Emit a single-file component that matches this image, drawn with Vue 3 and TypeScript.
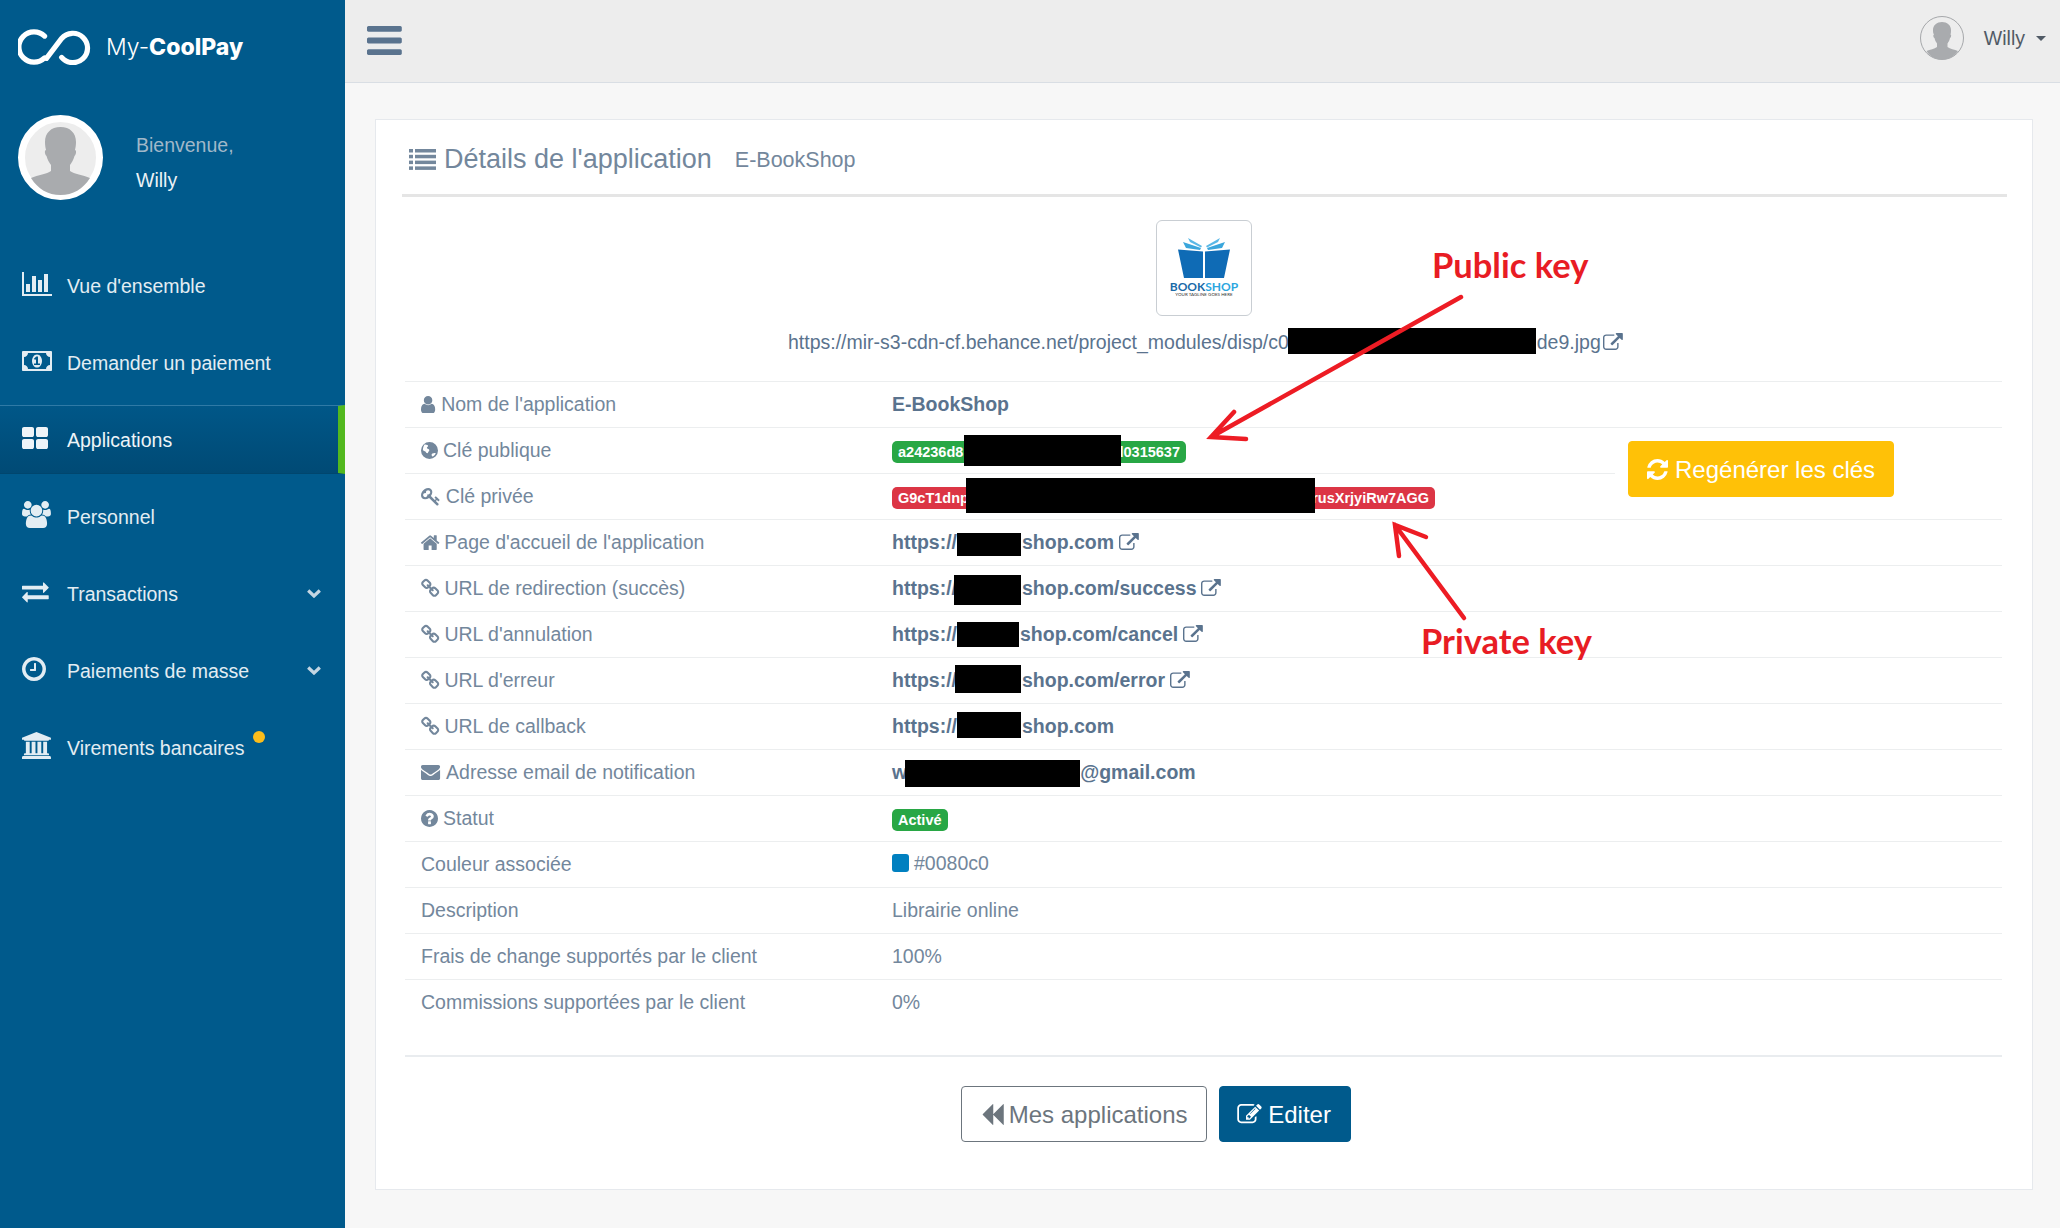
<script setup lang="ts">
import { h } from 'vue'

const icons: Record<string, { vb: string; d: string }> = {
  bars: { vb: '128 256 1536 1280', d: 'M1664 1344v128q0 26-19 45t-45 19h-1408q-26 0-45-19t-19-45v-128q0-26 19-45t45-19h1408q26 0 45 19t19 45zm0-512v128q0 26-19 45t-45 19h-1408q-26 0-45-19t-19-45v-128q0-26 19-45t45-19h1408q26 0 45 19t19 45zm0-512v128q0 26-19 45t-45 19h-1408q-26 0-45-19t-19-45v-128q0-26 19-45t45-19h1408q26 0 45 19t19 45z' },
  user: { vb: '256 128 1280 1536', d: 'M1536 1399q0 109-62.5 187t-150.5 78h-854q-88 0-150.5-78t-62.5-187q0-85 8.5-160.5t31.5-152 58.5-131 94-89 134.5-34.5q131 128 313 128t313-128q76 0 134.5 34.5t94 89 58.5 131 31.5 152 8.5 160.5zm-256-887q0 159-112.5 271.5t-271.5 112.5-271.5-112.5-112.5-271.5 112.5-271.5 271.5-112.5 271.5 112.5 112.5 271.5z' },
  home: { vb: '96 224 1600 1312', d: 'M1472 992v480q0 26-19 45t-45 19h-384v-384h-256v384h-384q-26 0-45-19t-19-45v-480q0-1 .5-3t.5-3l575-474 575 474q1 2 1 6zm223-69l-62 74q-8 9-21 11h-3q-13 0-21-7l-692-577-692 577q-12 8-24 7-13-2-21-11l-62-74q-8-10-7-23.5t11-21.5l719-599q32-26 76-26t76 26l244 204v-195q0-14 9-23t23-9h192q14 0 23 9t9 23v408l219 182q10 8 11 21.5t-7 23.5z' },
  envelope: { vb: '0 256 1792 1408', d: 'M1792 710v794q0 66-47 113t-113 47h-1472q-66 0-113-47t-47-113v-794q44 49 101 87 362 246 497 345 57 42 92.5 65.5t94.5 48 110 24.5h2q51 0 110-24.5t94.5-48 92.5-65.5q170-123 498-345 57-39 100-87zm0-294q0 79-49 151t-122 123q-376 261-468 325-10 7-42.5 30.5t-54 38-52 32.5-57.5 27-50 9h-2q-23 0-50-9t-57.5-27-52-32.5-54-38-42.5-30.5q-91-64-262-182.5t-205-142.5q-62-42-117-115.5t-55-136.5q0-78 41.5-130t118.5-52h1472q65 0 112.5 47t47.5 113z' },
  ext: { vb: '0 0 1792 1536', d: 'M1408 928v320q0 119-84.5 203.5t-203.5 84.5h-832q-119 0-203.5-84.5t-84.5-203.5v-832q0-119 84.5-203.5t203.5-84.5h704q14 0 23 9t9 23v64q0 14-9 23t-23 9h-704q-66 0-113 47t-47 113v832q0 66 47 113t113 47h832q66 0 113-47t47-113v-320q0-14 9-23t23-9h64q14 0 23 9t9 23zm384-864v512q0 26-19 45t-45 19-45-19l-176-176-652 652q-10 10-23 10t-23-10l-114-114q-10-10-10-23t10-23l652-652-176-176q-19-19-19-45t19-45 45-19h512q26 0 45 19t19 45z' },
  question: { vb: '128 128 1536 1536', d: 'M1024 1376v-192q0-14-9-23t-23-9h-192q-14 0-23 9t-9 23v192q0 14 9 23t23 9h192q14 0 23-9t9-23zm256-672q0-88-55.5-163t-138.5-116-170-41q-243 0-371 213-15 24 8 42l132 100q7 6 19 6 16 0 25-12 53-68 86-92 34-24 86-24 48 0 85.5 26t37.5 59q0 38-20 61t-68 45q-63 28-115.5 86.5t-52.5 125.5v36q0 14 9 23t23 9h192q14 0 23-9t9-23q0-19 21.5-49.5t54.5-49.5q32-18 49-28.5t46-35 44.5-48 28-60.5 12.5-81zm384 192q0 209-103 385.5t-279.5 279.5-385.5 103-385.5-103-279.5-279.5-103-385.5 103-385.5 279.5-279.5 385.5-103 385.5 103 279.5 279.5 103 385.5z' },
  refresh: { vb: '128 128 1536 1536', d: 'M1639 1056q0 5-1 7-64 268-268 434.5t-478 166.5q-146 0-282.5-55t-243.5-157l-129 129q-19 19-45 19t-45-19-19-45v-448q0-26 19-45t45-19h448q26 0 45 19t19 45-19 45l-137 137q71 66 161 102t187 36q134 0 250-65t186-179q11-17 53-117 8-23 30-23h192q13 0 22.5 9.5t9.5 22.5zm25-800v448q0 26-19 45t-45 19h-448q-26 0-45-19t-19-45 19-45l138-138q-148-137-349-137-134 0-250 65t-186 179q-11 17-53 117-8 23-30 23h-199q-13 0-22.5-9.5t-9.5-22.5v-7q65-268 270-434.5t480-166.5q146 0 284 55.5t245 156.5l130-129q19-19 45-19t45 19 19 45z' },
  backward: { vb: '64 128 1664 1536', d: 'M1683 141q19-19 32-13t13 32v1472q0 26-13 32t-32-13l-710-710q-9-9-13-19v710q0 26-13 32t-32-13l-710-710q-19-19-19-45t19-45l710-710q19-19 32-13t13 32v710q4-10 13-19z' },
  edit: { vb: '128 128 1664 1536', d: 'M888 1184l116-116-152-152-116 116v56h96v96h56zm440-720q-16-16-33 1l-350 350q-17 17-1 33t33-1l350-350q17-17 1-33zm80 594v190q0 119-84.5 203.5t-203.5 84.5h-832q-119 0-203.5-84.5t-84.5-203.5v-832q0-119 84.5-203.5t203.5-84.5h832q63 0 117 25 15 7 18 23 3 17-9 29l-49 49q-14 14-32 8-23-6-45-6h-832q-66 0-113 47t-47 113v832q0 66 47 113t113 47h832q66 0 113-47t47-113v-126q0-13 9-22l64-64q15-15 35-7t20 29zm-96-738l288 288-672 672h-288v-288zm444 132l-92 92-288-288 92-92q28-28 68-28t68 28l152 152q28 28 28 68t-28 68z' },
  chart: { vb: '64 128 1920 1536', d: 'M576 896v512h-256v-512h256zm384-512v1024h-256v-1024h256zm1024 1152v128h-1920v-1536h128v1408h1792zm-640-896v768h-256v-768h256zm384-384v1152h-256v-1152h256z' },
  money: { vb: '0 256 1920 1280', d: 'M768 1152h384v-96h-128v-448h-114l-148 137 77 80q42-37 55-57h2v288h-128v96zm512-256q0 70-21 142t-59.5 134-101.5 101-138 39-138-39-101.5-101-59.5-134-21-142 21-142 59.5-134 101.5-101 138-39 138 39 101.5 101 59.5 134 21 142zm512 256v-512q-106 0-181-75t-75-181h-1152q0 106-75 181t-181 75v512q106 0 181 75t75 181h1152q0-106 75-181t181-75zm128-832v1152q0 26-19 45t-45 19h-1792q-26 0-45-19t-19-45v-1152q0-26 19-45t45-19h1792q26 0 45 19t19 45z' },
  grid: { vb: '64 128 1664 1408', d: 'M832 1024v384q0 52-38 90t-90 38h-512q-52 0-90-38t-38-90v-384q0-52 38-90t90-38h512q52 0 90 38t38 90zm0-768v384q0 52-38 90t-90 38h-512q-52 0-90-38t-38-90v-384q0-52 38-90t90-38h512q52 0 90 38t38 90zm896 768v384q0 52-38 90t-90 38h-512q-52 0-90-38t-38-90v-384q0-52 38-90t90-38h512q52 0 90 38t38 90zm0-768v384q0 52-38 90t-90 38h-512q-52 0-90-38t-38-90v-384q0-52 38-90t90-38h512q52 0 90 38t38 90z' },
  users: { vb: '0 0 1920 1792', d: 'M593 896q-162 5-265 128h-134q-82 0-138-40.5t-56-118.5q0-353 124-353 6 0 43.5 21t97.5 42.5 119 21.5q67 0 133-23-5 37-5 66 0 139 81 256zm1071 637q0 120-73 189.5t-194 69.5h-874q-121 0-194-69.5t-73-189.5q0-53 3.5-103.5t14-109 26.5-108.5 43-97.5 62-81 85.5-53.5 111.5-20q10 0 43 21.5t73 48 107 48 135 21.5 135-21.5 107-48 73-48 43-21.5q61 0 111.5 20t85.5 53.5 62 81 43 97.5 26.5 108.5 14 109 3.5 103.5zm-1024-1277q0 106-75 181t-181 75-181-75-75-181 75-181 181-75 181 75 75 181zm704 384q0 159-112.5 271.5t-271.5 112.5-271.5-112.5-112.5-271.5 112.5-271.5 271.5-112.5 271.5 112.5 112.5 271.5zm576 225q0 78-56 118.5t-138 40.5h-134q-103-123-265-128 81-117 81-256 0-29-5-66 66 23 133 23 59 0 119-21.5t97.5-42.5 43.5-21q124 0 124 353zm-128-609q0 106-75 181t-181 75-181-75-75-181 75-181 181-75 181 75 75 181z' },
  exchange: { vb: '0 192 1792 1408', d: 'M1792 1184v192q0 13-9.5 22.5t-22.5 9.5h-1376v192q0 13-9.5 22.5t-22.5 9.5q-12 0-24-10l-319-320q-9-9-9-22 0-14 9-23l320-320q9-9 23-9 13 0 22.5 9.5t9.5 22.5v192h1376q13 0 22.5 9.5t9.5 22.5zm0-544q0 14-9 23l-320 320q-9 9-23 9-13 0-22.5-9.5t-9.5-22.5v-192h-1376q-13 0-22.5-9.5t-9.5-22.5v-192q0-13 9.5-22.5t22.5-9.5h1376v-192q0-14 9-23t23-9q12 0 24 10l319 319q9 9 9 23z' },
  clock: { vb: '128 128 1536 1536', d: 'M1024 544v448q0 14-9 23t-23 9h-320q-14 0-23-9t-9-23v-64q0-14 9-23t23-9h224v-352q0-14 9-23t23-9h64q14 0 23 9t9 23zm416 352q0-148-73-273t-198-198-273-73-273 73-198 198-73 273 73 273 198 198 273 73 273-73 198-198 73-273zm224 0q0 209-103 385.5t-279.5 279.5-385.5 103-385.5-103-279.5-279.5-103-385.5 103-385.5 279.5-279.5 385.5-103 385.5 103 279.5 279.5 103 385.5z' },
  bank: { vb: '0 0 1920 1792', d: 'M960 0l960 384v128h-128q0 26-20.5 45t-48.5 19h-1526q-28 0-48.5-19t-20.5-45h-128v-128zm-704 640h256v768h128v-768h256v768h128v-768h256v768h128v-768h256v768h59q28 0 48.5 19t20.5 45v64h-1664v-64q0-26 20.5-45t48.5-19h59v-768zm1595 960q28 0 48.5 19t20.5 45v128h-1920v-128q0-26 20.5-45t48.5-19h1782z' },
  link: { vb: '0 128 1664 1536', d: 'M1456 1216q0-40-28-68l-208-208q-28-28-68-28-42 0-72 32 3 3 19 18.5t21.5 21.5 15 19 13 25.5 3.5 27.5q0 40-28 68t-68 28q-15 0-27.5-3.5t-25.5-13-19-15-21.5-21.5-18.5-19q-33 31-33 73 0 40 28 68l206 207q27 27 68 27 40 0 68-26l147-146q28-28 28-67zm-703-705q0-40-28-68l-206-207q-28-28-68-28-39 0-68 27l-147 146q-28 28-28 67 0 40 28 68l208 208q27 27 68 27 42 0 72-31-3-3-19-18.5t-21.5-21.5-15-19-13-25.5-3.5-27.5q0-40 28-68t68-28q15 0 27.5 3.5t25.5 13 19 15 21.5 21.5 18.5 19q33-31 33-73zm895 705q0 120-85 203l-147 146q-83 83-203 83-121 0-204-85l-206-207q-83-83-83-203 0-123 88-209l-88-88q-86 88-208 88-120 0-204-84l-208-208q-84-84-84-204t85-203l147-146q83-83 203-83 121 0 204 85l206 207q83 83 83 203 0 123-88 209l88 88q86-88 208-88 120 0 204 84l208 208q84 84 84 204z' },
  key: { vb: '0 128 1792 1536', d: 'M832 512q0-80-56-136t-136-56-136 56-56 136q0 42 19 83-41-19-83-19-80 0-136 56t-56 136 56 136 136 56 136-56 56-136q0-42-19-83 41 19 83 19 80 0 136-56t56-136zm851 704q0 17-49 66t-66 49q-9 0-28.5-16t-36.5-33-38.5-40-24.5-26l-96 96 220 220q28 28 28 68 0 42-39 81t-81 39q-40 0-68-28l-671-671q-176 131-365 131-163 0-265.5-102.5t-102.5-265.5q0-160 95-313t248-248 313-95q163 0 265.5 102.5t102.5 265.5q0 189-131 365l355 355 96-96q-3-3-26-24.5t-40-38.5-33-36.5-16-28.5q0-17 49-66t66-49q13 0 23 10 6 6 46 44.5t82 79.5 86.5 86 73 78 28.5 41z' },
  globe: { vb: '0 0 24 24', d: 'M12 0a12 12 0 1 0 0 24a12 12 0 0 0 0-24zM5 3.5c1.8.3 3.4.2 4.6 1.1c.9.7.4 1.8-.5 2.3c-1 .6-1 1.6-.2 2.3c.9.7 2.2.6 2.7 1.7c.4 1-.3 1.9-.9 2.6c-.7.8-.6 2.2-1.6 2.5C7.700 16 7 14.500 6.200 13.500C5.400 12.600 3.600 12.300 2.600 11.500C2.900 8.300 3.500 5.700 5 3.500zM20.800 15.800c-.6 1.800-2.600 3.800-4.300 4.700c-1.300-.5-1.700-2-1.400-3.200c.4-1.200 1.800-1.300 2.900-1.500c1-.2 1.800-.3 2.800 0z' },
}

const Ic = (props: { name: string }) =>
  h('svg', { viewBox: icons[props.name].vb, xmlns: 'http://www.w3.org/2000/svg', overflow: 'visible' }, [
    h('path', { d: icons[props.name].d, fill: 'currentColor' }),
  ])
Ic.props = ['name']

interface MenuItem { icon: string; label: string; active?: boolean; chevron?: boolean; dot?: boolean }
const menu: MenuItem[] = [
  { icon: 'chart', label: "Vue d'ensemble" },
  { icon: 'money', label: 'Demander un paiement' },
  { icon: 'grid', label: 'Applications', active: true },
  { icon: 'users', label: 'Personnel' },
  { icon: 'exchange', label: 'Transactions', chevron: true },
  { icon: 'clock', label: 'Paiements de masse', chevron: true },
  { icon: 'bank', label: 'Virements bancaires', dot: true },
]

interface Row {
  icon?: string
  label: string
  kind: 'bold' | 'pub' | 'priv' | 'link' | 'status' | 'color' | 'plain'
  lead?: string
  gap?: number
  tail?: string
  ext?: boolean
}
const rows: Row[] = [
  { icon: 'user', label: "Nom de l'application", kind: 'bold', lead: 'E-BookShop' },
  { icon: 'globe', label: 'Clé publique', kind: 'pub' },
  { icon: 'key', label: 'Clé privée', kind: 'priv' },
  { icon: 'home', label: "Page d'accueil de l'application", kind: 'link', lead: 'https://', gap: 65, tail: 'shop.com', ext: true },
  { icon: 'link', label: 'URL de redirection (succès)', kind: 'link', lead: 'https://', gap: 65, tail: 'shop.com/success', ext: true },
  { icon: 'link', label: "URL d'annulation", kind: 'link', lead: 'https://', gap: 63, tail: 'shop.com/cancel', ext: true },
  { icon: 'link', label: "URL d'erreur", kind: 'link', lead: 'https://', gap: 65, tail: 'shop.com/error', ext: true },
  { icon: 'link', label: 'URL de callback', kind: 'link', lead: 'https://', gap: 65, tail: 'shop.com' },
  { icon: 'envelope', label: 'Adresse email de notification', kind: 'link', lead: 'w', gap: 173, tail: '@gmail.com' },
  { icon: 'question', label: 'Statut', kind: 'status' },
  { label: 'Couleur associée', kind: 'color' },
  { label: 'Description', kind: 'plain', lead: 'Librairie online' },
  { label: 'Frais de change supportés par le client', kind: 'plain', lead: '100%' },
  { label: 'Commissions supportées par le client', kind: 'plain', lead: '0%' },
]

const masks = [
  [1288, 328, 248, 26],
  [964, 435, 157, 31],
  [966, 478, 349, 35],
  [957, 533, 64, 23],
  [954, 575, 67, 30],
  [957, 622, 62, 25],
  [955, 665, 66, 28],
  [957, 712, 64, 26],
  [905, 760, 175, 27],
]
</script>

<template>
  <div class="page">
    <aside class="sidebar">
      <div class="brand">
        <svg class="brand-mark" viewBox="0 0 78 38" fill="none" stroke="#fff" stroke-width="5.5" stroke-linecap="round">
          <path d="M28 7.500A16 16 0 1 0 28 30.500" />
          <path d="M30 31L46 10A15.500 15.500 0 1 1 46 30" />
        </svg>
        <span class="brand-text"><span class="brand-thin">My-</span><b>CoolPay</b></span>
      </div>
      <div class="profile">
        <svg class="avatar-big" viewBox="0 0 85 85">
          <circle cx="42.500" cy="42.500" r="39" fill="#ededed" stroke="#fff" stroke-width="7" />
          <path fill="#a9abae" d="M27 27c0-9 6-15 15.500-15S58 18 58 27c0 3-.5 6-1 8 1.500 0 1.500 4-.5 6-1 4-3 7-4.500 9v6c4 3 13 4 20 7-7 11-17 17-29.500 17S20 74 13 63c7-3 16-4 20-7v-6c-1.500-2-3.500-5-4.500-9-2-2-2-6-.5-6-.5-2-1-5-1-8z" />
        </svg>
        <div class="welcome">
          <div class="hello">Bienvenue,</div>
          <div class="who">Willy</div>
        </div>
      </div>
      <ul class="menu">
        <li v-for="m in menu" :key="m.label" :class="{ active: m.active }">
          <span class="menu-ico"><Ic :name="m.icon" :class="'mi-' + m.icon" /></span>
          <span class="menu-label">{{ m.label }}<i v-if="m.dot" class="dot"></i></span>
          <svg v-if="m.chevron" class="chev" viewBox="0 0 14 9" fill="none" stroke="currentColor" stroke-width="3.200">
            <path d="M1.200 1.500L7 7l5.800-5.500" />
          </svg>
        </li>
      </ul>
    </aside>

    <div class="main">
      <header class="topbar">
        <Ic name="bars" class="burger" />
        <div class="account">
          <svg class="avatar-small" viewBox="0 0 44 44">
            <circle cx="22" cy="22" r="21.500" fill="#ededed" stroke="#a5a7aa" stroke-width="1" />
            <path fill="#a9abae" d="M13 14c0-5 4-8 9-8s9 3 9 8c0 2 0 3-.5 4.500 1 0 .8 3-.5 3.500-.5 2.500-1.500 4-2.500 5.500v3.500c2.500 2 7 2.500 10.500 4C34 41 28.500 43.500 22 43.500S10 41 6.500 35c3.500-1.500 8-2 10.500-4v-3.500c-1-1.500-2-3-2.500-5.500-1.300-.5-1.500-3.500-.5-3.500C13 17 13 16 13 14z" />
          </svg>
          <span class="account-name">Willy</span>
          <i class="caret"></i>
        </div>
      </header>

      <section class="card">
        <div class="card-head">
          <svg class="title-ico" viewBox="0 0 27 21" fill="currentColor">
            <rect x="0" y="0" width="4" height="3.500" /><rect x="6" y="0" width="21" height="3.500" />
            <rect x="0" y="5.800" width="4" height="3.500" /><rect x="6" y="5.800" width="21" height="3.500" />
            <rect x="0" y="11.600" width="4" height="3.500" /><rect x="6" y="11.600" width="21" height="3.500" />
            <rect x="0" y="17.400" width="4" height="3.500" /><rect x="6" y="17.400" width="21" height="3.500" />
          </svg>
          <h2 class="title">Détails de l'application</h2>
          <span class="subtitle">E-BookShop</span>
        </div>

        <div class="logo-box">
          <svg viewBox="0 0 94 94" width="94" height="94">
            <path fill="#3aa6dc" d="M29 27L26 21l18 6-1 2zM65 27l3-6-18 6 1 2z" />
            <path fill="#5ab8e6" d="M33 21l-2-4 14 8-1 1.500zM61 21l2-4-14 8 1 1.500z" />
            <path fill="#0f6bb5" d="M21 28.500l25 2V57H27zM73 28.500l-25 2V57h19z" />
            <text x="47" y="70" text-anchor="middle" class="logo-name"><tspan fill="#1a6aa8">BOOK</tspan><tspan fill="#2ba6e0">SHOP</tspan></text>
            <text x="47" y="75" text-anchor="middle" class="logo-tag">YOUR TAGLINE GOES HERE</text>
          </svg>
        </div>
        <div class="logo-url">
          <span>https://mir-s3-cdn-cf.behance.net/project_modules/disp/c0</span><span class="logo-gap"></span><span>de9.jpg</span>
          <Ic name="ext" class="ext ext-url" />
        </div>

        <table class="details">
          <colgroup><col class="c1" /><col class="c2" /><col class="c3" /></colgroup>
          <tbody>
            <tr v-for="r in rows" :key="r.label">
              <th>
                <Ic v-if="r.icon" :name="r.icon" class="label-ico" :class="'li-' + r.icon" />{{ r.label }}
              </th>
              <td :colspan="r.kind === 'pub' || r.kind === 'priv' ? 1 : 2">
                <span v-if="r.kind === 'pub'" class="badge green keyb-pub"><span>a24236d8</span><span>d0315637</span></span>
                <span v-else-if="r.kind === 'priv'" class="badge red keyb-priv"><span>G9cT1dnp</span><span>rusXrjyiRw7AGG</span></span>
                <span v-else-if="r.kind === 'status'" class="badge green">Activé</span>
                <span v-else-if="r.kind === 'color'" class="color-val"><i class="swatch"></i>#0080c0</span>
                <span v-else-if="r.kind === 'plain'">{{ r.lead }}</span>
                <span v-else class="strong">
                  {{ r.lead }}<span v-if="r.gap" class="mask-gap" :style="{ width: r.gap + 'px' }"></span>{{ r.tail }}<Ic v-if="r.ext" name="ext" class="ext ext-row" />
                </span>
              </td>
              <td v-if="r.kind === 'pub'" rowspan="2" class="regen-cell">
                <button class="btn btn-warn"><Ic name="refresh" class="btn-ico" />Regénérer les clés</button>
              </td>
            </tr>
          </tbody>
        </table>

        <hr class="rule" />
        <div class="actions">
          <button class="btn btn-outline"><Ic name="backward" class="btn-ico" />Mes applications</button>
          <button class="btn btn-primary"><Ic name="edit" class="btn-ico" />Editer</button>
        </div>
      </section>
    </div>

    <svg class="overlay" viewBox="0 0 2060 1228" width="2060" height="1228">
      <rect v-for="(m, i) in masks" :key="i" :x="m[0]" :y="m[1]" :width="m[2]" :height="m[3]" fill="#000" />
      <g fill="none" stroke="#ed1c24" stroke-width="4.500" stroke-linecap="round">
        <path d="M1461 297L1211 437M1234 412L1211 437L1246 439" />
        <path d="M1464 618L1395 525M1426 537L1395 525L1399 556" />
      </g>
    </svg>
    <span class="note note-pub">Public key</span>
    <span class="note note-priv">Private key</span>
  </div>
</template>

<style>
html, body { margin: 0; background: #f7f7f7; }
</style>

<style scoped>
.page {
  position: relative;
  display: flex;
  width: 2060px;
  height: 1228px;
  overflow: hidden;
  background: #f7f7f7;
  font-family: "Liberation Sans", Arial, sans-serif;
  font-size: 19.5px;
  color: #73879c;
}
.sidebar {
  flex: 0 0 345px;
  background: #005a8c;
  color: #e3edf3;
}
.brand { display: flex; align-items: center; height: 83px; padding-left: 18px; padding-top: 10px; box-sizing: border-box; }
.brand-mark { width: 74px; height: 36px; margin-right: 14px; }
.brand-text { font-family: Inter, "Liberation Sans", sans-serif; font-size: 23px; color: #fff; white-space: nowrap; }
.brand-thin { font-weight: 300; }
.brand-text b { font-weight: 800; }
.profile { display: flex; align-items: center; margin-top: 32px; padding-left: 18px; }
.avatar-big { width: 85px; height: 85px; flex: none; }
.welcome { margin-left: 33px; padding-top: 10px; line-height: 35px; }
.hello { color: #a0b8c9; }
.who { color: #ecf2f6; }
.menu { list-style: none; margin: 51px 0 0; padding: 0; }
.menu li {
  display: flex;
  align-items: center;
  height: 69px;
  margin-bottom: 8px;
  padding-left: 22px;
  box-sizing: border-box;
  white-space: nowrap;
}
.menu li.active {
  color: #eef4f8;
  background: linear-gradient(#005788, #004a75);
  border-top: 1px solid #2f7aa6;
  border-bottom: 1px solid #00466e;
  border-right: 7px solid #52b81e;
}
.menu-ico { flex: 0 0 45px; display: flex; align-items: center; margin-top: -4px; }
.mi-chart { height: 24px; }
.mi-money { height: 20px; }
.mi-grid { height: 22px; }
.mi-users { height: 27px; }
.mi-exchange { height: 21px; }
.mi-clock { height: 24px; }
.mi-bank { height: 27px; }
.menu-label { position: relative; padding-top: 2px; }
.dot {
  position: absolute;
  right: -21px;
  top: -4px;
  width: 12px;
  height: 12px;
  border-radius: 50%;
  background: #fbbd1c;
}
.chev { width: 14px; height: 9px; margin-left: auto; margin-right: 24px; color: #c4d6e3; }

.main { flex: 1; min-width: 0; }
.topbar {
  display: flex;
  align-items: center;
  justify-content: space-between;
  height: 83px;
  box-sizing: border-box;
  padding: 0 14px 0 22px;
  background: #ededed;
  border-bottom: 1px solid #d9dee4;
}
.burger { height: 29px; color: #5a738e; margin-top: -1px; }
.account { display: flex; align-items: center; margin-top: -6px; }
.avatar-small { width: 44px; height: 44px; }
.account-name { margin-left: 20px; color: #515b66; }
.caret {
  width: 0; height: 0;
  margin-left: 11px;
  border-left: 5px solid transparent;
  border-right: 5px solid transparent;
  border-top: 5px solid #515b66;
}
.card {
  margin: 36px 27px 0 30px;
  background: #fff;
  border: 1px solid #e6e9ed;
}
.card-head {
  display: flex;
  align-items: center;
  height: 77px;
  box-sizing: border-box;
  margin: 0 25px 0 26px;
  padding: 5px 0 0 7px;
  border-bottom: 3px solid #e5e5e5;
}
.title-ico { width: 27px; height: 21px; flex: none; color: #73879c; margin-right: 8px; }
.title { margin: 0; font-size: 27px; font-weight: 400; color: #73879c; white-space: nowrap; }
.subtitle { margin-left: 23px; font-size: 21.5px; color: #73879c; margin-top: 2px; }
.logo-box {
  width: 94px;
  height: 94px;
  margin: 23px 0 0 780px;
  border: 1px solid #c9ced3;
  border-radius: 6px;
}
.logo-box svg { display: block; }
.logo-name { font-family: Lato, sans-serif; font-weight: 700; font-size: 12px; }
.logo-tag { font-family: Lato, sans-serif; font-size: 4.500px; fill: #333; }
.logo-url {
  display: flex;
  align-items: center;
  height: 30px;
  margin: 11px 0 0 412px;
  color: #5a738e;
  white-space: nowrap;
}
.logo-gap { display: inline-block; width: 248px; }
.ext { height: 17px; margin-left: 5px; flex: none; }
.ext-url { margin-left: 2px; margin-top: -2px; }
.ext-row { vertical-align: -1px; }
.details {
  table-layout: fixed;
  border-collapse: separate;
  border-spacing: 0;
  width: 1597px;
  margin: 24px 0 0 29px;
}
.c1 { width: 487px; }
.c2 { width: 723px; }
.c3 { width: 387px; }
.details th, .details td {
  height: 46px;
  box-sizing: border-box;
  padding: 0;
  border-top: 1px solid #eceeef;
  text-align: left;
  font-weight: 400;
  vertical-align: middle;
  white-space: nowrap;
}
.details tr > th { padding-left: 16px; }
.label-ico { height: 17px; margin-right: 5px; vertical-align: -2px; }
.li-user { margin-right: 6px; }
.li-home { height: 15px; vertical-align: -1px; }
.li-envelope { height: 15px; vertical-align: -1px; margin-right: 6px; }
.strong { font-weight: 700; color: #5a738e; }
.mask-gap { display: inline-block; }
.badge {
  display: inline-block;
  height: 22px;
  line-height: 22px;
  margin-top: 2px;
  padding: 0 6px;
  box-sizing: border-box;
  border-radius: 5px;
  font-size: 14.5px;
  font-weight: 700;
  color: #fff;
  vertical-align: middle;
}
.green { background: #28a745; }
.red { background: #dc3545; }
.keyb-pub, .keyb-priv { display: inline-flex; justify-content: space-between; }
.keyb-pub { width: 294px; }
.keyb-priv { width: 543px; }
.color-val { display: inline-flex; align-items: center; }
.swatch { width: 17px; height: 18px; border-radius: 3px; background: #0080c0; margin-right: 5px; }
.regen-cell { vertical-align: top !important; padding-top: 13px !important; padding-left: 13px !important; }
.btn {
  display: inline-flex;
  align-items: center;
  height: 56px;
  box-sizing: border-box;
  border-radius: 4px;
  font-family: inherit;
  font-size: 24px;
  white-space: nowrap;
  cursor: pointer;
}
.btn-ico { height: 21px; margin-right: 5px; flex: none; }
.btn-warn { width: 266px; padding: 2px 18px 0; border: 1px solid #ffc107; background: #ffc107; color: #fff; }
.btn-warn .btn-ico { margin-right: 7px; margin-top: -2px; }
.btn-outline { padding: 2px 18px 0 19px; border: 1px solid #6c757d; background: #fff; color: #6c757d; }
.btn-outline .btn-ico { margin-top: -2px; }
.btn-primary { padding: 2px 19px 0; border: 1px solid #005a8c; background: #005a8c; color: #fff; }
.btn-primary .btn-ico { margin-right: 7px; margin-top: -2px; }
.rule { border: 0; border-top: 2px solid #e9ecef; width: 1597px; margin: 30px 0 0 29px; }
.actions { display: flex; gap: 12px; margin-top: 29px; padding: 0 0 47px 585px; }

.overlay { position: absolute; left: 0; top: 0; pointer-events: none; }
.note {
  position: absolute;
  font-family: Lato, "Liberation Sans", sans-serif;
  font-weight: 700;
  font-size: 34.5px;
  line-height: 40px;
  color: #e81c24;
  white-space: nowrap;
}
.note-pub { left: 1432px; top: 245px; }
.note-priv { left: 1421px; top: 621px; }
</style>
